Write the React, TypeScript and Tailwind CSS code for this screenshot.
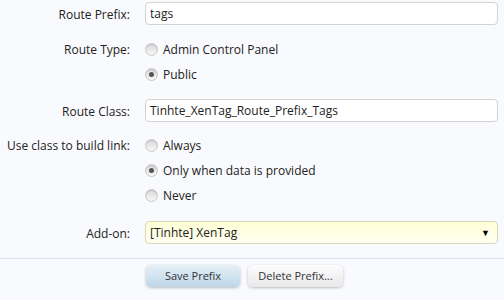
import React from 'react';

type RadioProps = { label: string; checked?: boolean };

function Radio({ label, checked }: RadioProps) {
  return (
    <label className="flex items-center h-[25px] gap-[5px]">
      <span className="w-[13px] h-[13px] rounded-full border border-[#c8c8c8] bg-gradient-to-b from-[#d9d9d9] to-[#f7f7f7] shadow-[inset_0_1px_1px_rgba(0,0,0,0.12)] flex items-center justify-center">
        {checked && <span className="w-[5px] h-[5px] rounded-full bg-[#555]" />}
      </span>
      <span>{label}</span>
    </label>
  );
}

function Row({ label, children, className }: { label: string; children: React.ReactNode; className?: string }) {
  return (
    <div className={'flex ' + (className ?? '')}>
      <div className="w-[130px] shrink-0 text-right leading-[25px]">{label}</div>
      <div className="flex-1 pl-[15px] pr-[6px]">{children}</div>
    </div>
  );
}

export default function App() {
  const font = { fontFamily: '"Open Sans", "Noto Sans", sans-serif' };
  return (
    <div className="w-[504px] h-[300px] bg-[#f9fafd] text-[12px] text-[#222] overflow-hidden" style={font}>
      <div className="pt-[2px]">
        <Row label="Route Prefix:">
          <div className="h-[23px] border border-[#d3d3d3] rounded-[4px] bg-white px-[4px] leading-[21px]">tags</div>
        </Row>

        <Row label="Route Type:" className="mt-[10px]">
          <Radio label="Admin Control Panel" />
          <Radio label="Public" checked />
        </Row>

        <Row label="Route Class:" className="mt-[12px]">
          <div className="h-[23px] border border-[#d3d3d3] rounded-[4px] bg-white px-[4px] leading-[21px]">Tinhte_XenTag_Route_Prefix_Tags</div>
        </Row>

        <Row label="Use class to build link:" className="mt-[9px]">
          <Radio label="Always" />
          <Radio label="Only when data is provided" checked />
          <Radio label="Never" />
        </Row>

        <Row label="Add-on:" className="mt-[13px]">
          <div className="h-[23px] border border-[#d8d8b8] rounded-[4px] bg-gradient-to-b from-[#ffffd6] to-[#fffff2] px-[4px] leading-[21px] flex justify-between items-center">
            <span>[Tinhte] XenTag</span>
            <span className="text-[9px] text-black pr-[3px]">▼</span>
          </div>
        </Row>
      </div>

      <div className="mt-[12px] border-t border-[#d7e5ef]" />

      <div className="flex gap-[8px] pl-[146px] pt-[6px]">
        <button className="w-[94px] h-[22px] rounded-[5px] bg-gradient-to-b from-[#e6f0f7] to-[#bdd7e9] shadow-[0_1px_3px_rgba(0,0,0,0.25)] text-[11px] text-[#333]">Save Prefix</button>
        <button className="w-[95px] h-[22px] rounded-[5px] bg-gradient-to-b from-[#fdfdfd] to-[#e8e8e8] shadow-[0_1px_3px_rgba(0,0,0,0.25)] text-[11px] text-[#333]">Delete Prefix...</button>
      </div>
    </div>
  );
}
